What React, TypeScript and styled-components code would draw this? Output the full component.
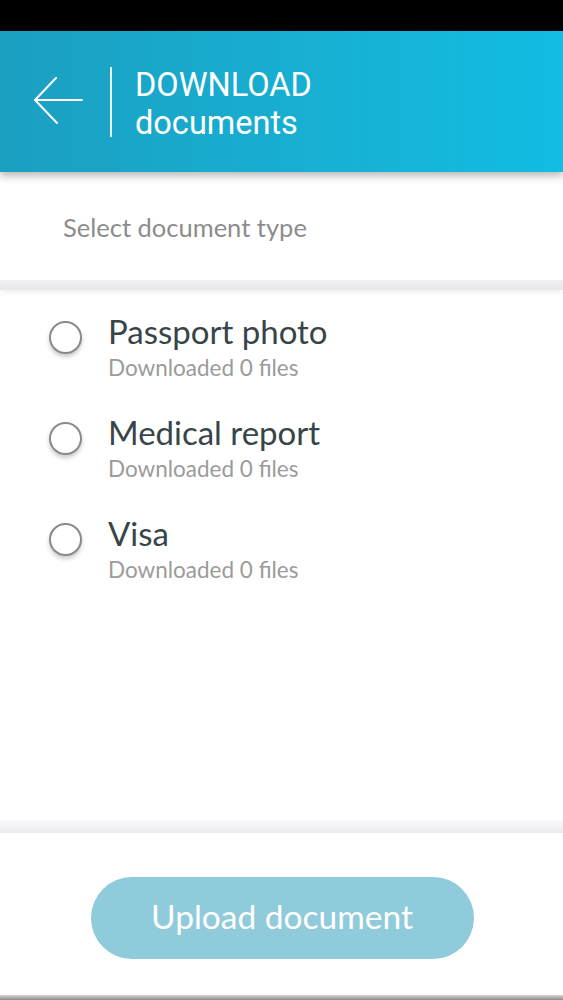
import React from "react";
import styled, { createGlobalStyle } from "styled-components";

const Global = createGlobalStyle`
  html, body { margin: 0; padding: 0; background: #ffffff; }
  #root { height: 100vh; }
  * { box-sizing: border-box; }
`;

const Screen = styled.div`
  height: 100vh;
  display: flex;
  flex-direction: column;
  background: #ffffff;
  overflow: hidden;
`;

const StatusBar = styled.div`
  height: 31px;
  flex: none;
  background: #000000;
`;

const Header = styled.header`
  position: relative;
  z-index: 2;
  height: 141px;
  flex: none;
  display: flex;
  align-items: center;
  background: linear-gradient(90deg, #1b9fc1 0%, #17b1d4 60%, #12bce3 100%);
  box-shadow: 0 4px 8px rgba(0, 0, 0, 0.28);
  padding-left: 33px;
`;

const BackButton = styled.button`
  width: 52px;
  height: 50px;
  padding: 0;
  border: none;
  background: transparent;
  display: flex;
  align-items: center;
  justify-content: flex-start;
  cursor: pointer;
`;

const Divider = styled.div`
  width: 2px;
  height: 70px;
  background: rgba(255, 255, 255, 0.9);
  margin-left: 25px;
  margin-right: 23px;
`;

const Title = styled.h1`
  margin: 0;
  font-family: Roboto, "Liberation Sans", sans-serif;
  font-weight: 400;
  font-size: 32.5px;
  line-height: 38px;
  color: #ffffff;
  margin-top: 5px;
`;

const SubHeader = styled.div`
  height: 108px;
  flex: none;
  display: flex;
  align-items: center;
  padding-left: 63px;
  padding-top: 2px;
  font-family: Lato, "Open Sans", sans-serif;
  font-size: 25.5px;
  color: #8c8c8c;
`;

const Band = styled.div`
  height: 10px;
  flex: none;
  background: linear-gradient(180deg, #f0f0f2 0%, #e7e7ea 100%);
  box-shadow: 0 3px 4px rgba(0, 0, 0, 0.06);
`;

const List = styled.ul`
  list-style: none;
  margin: 0;
  padding: 21px 0 0 0;
  flex: 1;
`;

const Row = styled.li`
  height: 101px;
  display: flex;
  align-items: flex-start;
  padding-left: 49px;
`;

const Radio = styled.span`
  width: 33px;
  height: 33px;
  flex: none;
  margin-top: 10px;
  border-radius: 50%;
  border: 2px solid #8a8a8a;
  background: #ffffff;
  box-shadow: 0 3px 4px rgba(0, 0, 0, 0.2);
`;

const RowText = styled.div`
  margin-left: 26px;
  display: flex;
  flex-direction: column;
  font-family: Lato, "Open Sans", sans-serif;
`;

const RowTitle = styled.span`
  font-size: 33px;
  line-height: 40px;
  color: #384548;
`;

const RowSub = styled.span`
  font-size: 22.5px;
  line-height: 30px;
  margin-top: 2px;
  color: #9b9b9b;
`;

const FooterBand = styled.div`
  height: 13px;
  flex: none;
  background: linear-gradient(180deg, #fafafb 0%, #ebebee 100%);
`;

const Footer = styled.div`
  height: 162px;
  flex: none;
  display: flex;
  justify-content: center;
  padding-top: 44px;
`;

const UploadButton = styled.button`
  width: 383px;
  height: 82px;
  border: none;
  border-radius: 41px;
  background: #8fcbdb;
  color: #ffffff;
  font-family: Lato, "Open Sans", sans-serif;
  font-size: 33.5px;
  padding: 0 0 4px 0;
  margin-left: 1px;
  cursor: pointer;
`;

const NavEdge = styled.div`
  height: 5px;
  flex: none;
  background: linear-gradient(180deg, #d8d8d8 0%, #8a8a8a 100%);
`;

const items = ["Passport photo", "Medical report", "Visa"];

export default function App() {
  return (
    <Screen>
      <Global />
      <StatusBar />
      <Header>
        <BackButton aria-label="Back">
          <svg width="50" height="50" viewBox="0 0 50 50" fill="none">
            <path
              d="M2 23 H49 M23 1 L2 23 L24 46"
              stroke="#ffffff"
              strokeWidth="2"
              strokeLinecap="round"
              strokeLinejoin="round"
            />
          </svg>
        </BackButton>
        <Divider />
        <Title>
          DOWNLOAD
          <br />
          documents
        </Title>
      </Header>
      <SubHeader>Select document type</SubHeader>
      <Band />
      <List>
        {items.map((t) => (
          <Row key={t}>
            <Radio />
            <RowText>
              <RowTitle>{t}</RowTitle>
              <RowSub>Downloaded 0 files</RowSub>
            </RowText>
          </Row>
        ))}
      </List>
      <FooterBand />
      <Footer>
        <UploadButton>Upload document</UploadButton>
      </Footer>
      <NavEdge />
    </Screen>
  );
}
